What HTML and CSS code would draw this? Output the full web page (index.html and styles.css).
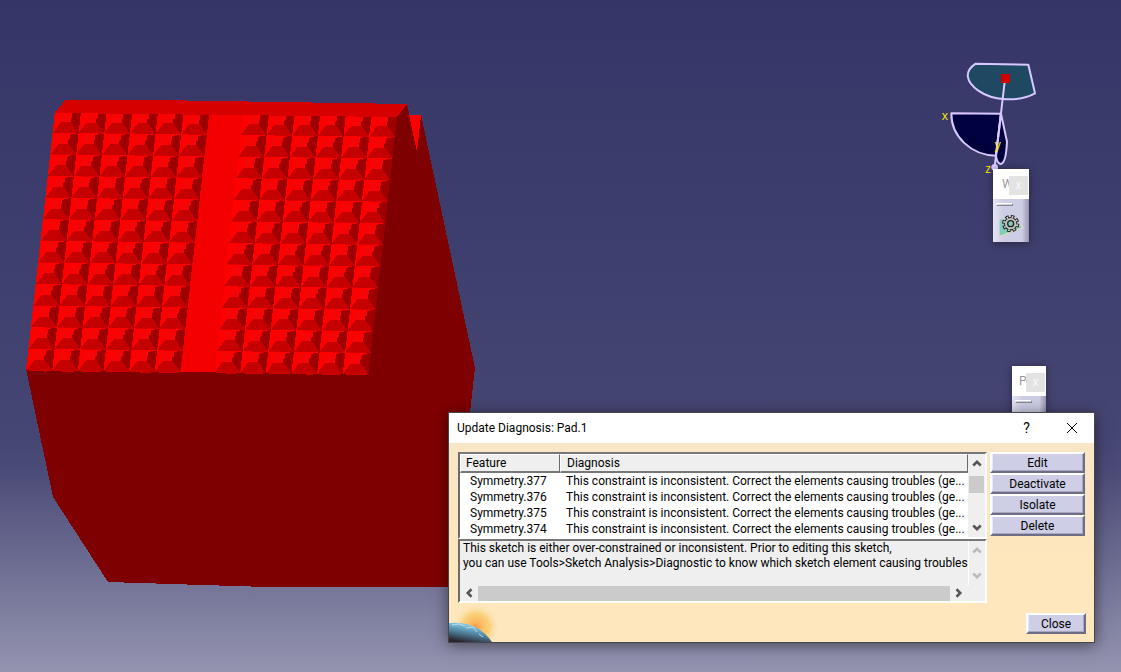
FILE: index.html
```html
<!DOCTYPE html>
<html lang="en">
<head>
    <meta charset="UTF-8">
    <meta name="viewport" content="width=device-width, initial-scale=1.0">
    <title>Update Diagnosis: Pad.1</title>
    <link rel="stylesheet" href="styles.css">
</head>
<body>
    <main class="viewport">
        <!-- 3D part -->
        <svg class="part" width="480" height="600" viewBox="0 0 480 600" shape-rendering="crispEdges">
            <defs>
                <g id="stud">
                    <path fill="#ff0000" d="M0 0L2.4-21.2L28-20.8L25.6.4z"/>
                    <path fill="#f50505" d="M8-19L19-19L18-10L7-10z"/>
                    <path fill="#9c0000" d="M28-21L22-20L19-19L19-15L17.500-14L17.500-10L25.600.4z"/>
                    <path fill="#c40000" d="M0 0L6-8L8-10.300L18-10.300L25.600.4z"/>
                    <path fill="#d40000" d="M0 0L25.600.4L20 1.500L5 1z"/>
                </g>
                <g id="row">
                    <use href="#stud"/>
                    <use href="#stud" x="25.65" y="0.3"/>
                    <use href="#stud" x="51.3" y="0.6"/>
                    <use href="#stud" x="76.95" y="0.9"/>
                    <use href="#stud" x="102.6" y="1.2"/>
                    <use href="#stud" x="128.25" y="1.5"/>
                    <use href="#stud" x="188" y="2.2"/>
                    <use href="#stud" x="213.65" y="2.5"/>
                    <use href="#stud" x="239.3" y="2.8"/>
                    <use href="#stud" x="264.95" y="3.1"/>
                    <use href="#stud" x="290.6" y="3.4"/>
                    <use href="#stud" x="316.25" y="3.7"/>
                </g>
            </defs>
            <path fill="#7f0000" d="M26 369L395 112L407 104L417 152L421 115L475 368L470 412V587H266L108 582L53 497z"/>
            <path fill="#fa0000" d="M409 115H421L417 152z"/>
            <path fill="#f40000" d="M55 111L397 116L368 374L26 370z"/>
            <use href="#row" x="53" y="132.5"/>
            <use href="#row" x="50.6" y="154.1"/>
            <use href="#row" x="48.2" y="175.7"/>
            <use href="#row" x="45.8" y="197.3"/>
            <use href="#row" x="43.4" y="218.9"/>
            <use href="#row" x="41" y="240.5"/>
            <use href="#row" x="38.6" y="262.1"/>
            <use href="#row" x="36.2" y="283.7"/>
            <use href="#row" x="33.8" y="305.3"/>
            <use href="#row" x="31.4" y="326.9"/>
            <use href="#row" x="29" y="348.5"/>
            <use href="#row" x="26.6" y="370.1"/>
            <path fill="#d60000" d="M65 100L154 100L407 104L397 117L55 113z"/>
        </svg>

        <!-- Compass -->
        <svg class="compass" width="120" height="125" viewBox="0 0 360 375">
            <g stroke="#d9c8ff" stroke-width="6" stroke-linejoin="round">
                <path fill="#1f4962" d="M137 41L295 44L315 130C270 155 190 155 145 122C108 96 101 65 137 41z"/>
                <path fill="#00003f" d="M64 190L213 191L198 317C125 316 63 260 64 190z"/>
                <path fill="#00003f" d="M213 191L231 275Q228 342 211 342Q200 338 198 317z"/>
                <path fill="none" d="M224 96L194 350"/>
            </g>
            <circle cx="194" cy="352" r="10" fill="#d9c8ff"/>
            <rect x="213" y="72" width="27" height="27" fill="#cf0000"/>
            <g class="compass-axis">
                <text x="35" y="211">x</text>
                <text x="194" y="297">y</text>
                <text x="166" y="369">z</text>
            </g>
        </svg>

        <section class="toolbar toolbar-w">
            <header class="toolbar-title">
                <span>W</span>
                <button class="toolbar-close" type="button">x</button>
            </header>
            <div class="toolbar-body">
                <div class="toolbar-grip"></div>
                <button class="toolbar-tool" type="button" aria-label="Part Design">
                    <svg width="26" height="26" viewBox="0 0 78 78">
                        <path fill="#83cdb8" d="M5 20L5 73L76 45z"/>
                        <path fill="none" stroke="#e6dfb3" stroke-width="3" d="M5 73L76 46L48 28"/>
                        <circle cx="38" cy="35" r="20" fill="#222" stroke="#222" stroke-width="12" stroke-dasharray="9.7 6"/>
                        <circle cx="38" cy="35" r="20" fill="none" stroke="#d5d5d0" stroke-width="6" stroke-dasharray="4.7 11" stroke-dashoffset="-2.5"/>
                        <circle cx="38" cy="35" r="17" fill="#c6c7c5"/>
                        <circle cx="38" cy="35" r="9" fill="#83cdb8" stroke="#222" stroke-width="4"/>
                    </svg>
                </button>
            </div>
        </section>

        <section class="toolbar toolbar-p">
            <header class="toolbar-title">
                <span>P</span>
                <button class="toolbar-close" type="button">x</button>
            </header>
            <div class="toolbar-body">
                <div class="toolbar-grip"></div>
            </div>
        </section>

        <!-- Diagnosis dialog -->
        <section class="dialog" role="dialog" aria-labelledby="dialogTitle">
            <header class="dialog-title">
                <h1 id="dialogTitle">Update Diagnosis: Pad.1</h1>
                <button class="title-button" type="button">?</button>
                <button class="title-button" type="button" aria-label="Close window">
                    <svg width="12" height="12" viewBox="0 0 12 12"><path d="M1 1L11 11M11 1L1 11"/></svg>
                </button>
            </header>
            <div class="dialog-body">
                <div class="dialog-main">
                    <div class="panels">
                        <div class="list">
                            <table>
                                <thead>
                                    <tr><th class="col-feature">Feature</th><th>Diagnosis</th></tr>
                                </thead>
                                <tbody>
                                    <tr><td>Symmetry.377</td><td>This constraint is inconsistent. Correct the elements causing troubles (ge...</td></tr>
                                    <tr><td>Symmetry.376</td><td>This constraint is inconsistent. Correct the elements causing troubles (ge...</td></tr>
                                    <tr><td>Symmetry.375</td><td>This constraint is inconsistent. Correct the elements causing troubles (ge...</td></tr>
                                    <tr><td>Symmetry.374</td><td>This constraint is inconsistent. Correct the elements causing troubles (ge...</td></tr>
                                </tbody>
                            </table>
                            <div class="scroll-y">
                                <svg class="arrow" viewBox="0 0 8 8"><path d="M1 6L4 3L7 6"/></svg>
                                <div class="thumb"></div>
                                <svg class="arrow" viewBox="0 0 8 8"><path d="M1 2L4 5L7 2"/></svg>
                            </div>
                        </div>
                        <div class="message">
                            <div class="message-top">
                                <textarea aria-label="Diagnosis message" wrap="off" readonly>This sketch is either over-constrained or inconsistent. Prior to editing this sketch,
you can use Tools&gt;Sketch Analysis&gt;Diagnostic to know which sketch element causing troubles</textarea>
                                <div class="scroll-y scroll-off">
                                    <svg class="arrow" viewBox="0 0 8 8"><path d="M1 6L4 3L7 6"/></svg>
                                    <svg class="arrow" viewBox="0 0 8 8"><path d="M1 2L4 5L7 2"/></svg>
                                </div>
                            </div>
                            <div class="scroll-x">
                                <svg class="arrow" viewBox="0 0 8 8"><path d="M6 1L3 4L6 7"/></svg>
                                <div class="thumb"></div>
                                <svg class="arrow" viewBox="0 0 8 8"><path d="M2 1L5 4L2 7"/></svg>
                            </div>
                        </div>
                    </div>
                    <div class="actions">
                        <button class="button" type="button">Edit</button>
                        <button class="button" type="button">Deactivate</button>
                        <button class="button" type="button">Isolate</button>
                        <button class="button" type="button">Delete</button>
                    </div>
                </div>
                <footer class="dialog-footer">
                    <svg class="planet" width="50" height="39" viewBox="0 0 50 39">
                        <defs>
                            <radialGradient id="sun">
                                <stop offset="0" stop-color="#ff9d45"/>
                                <stop offset="0.25" stop-color="#fdb960"/>
                                <stop offset="0.6" stop-color="#fad27c"/>
                                <stop offset="1" stop-color="#fde5bd" stop-opacity="0"/>
                            </radialGradient>
                            <linearGradient id="earth" x1="0.7" y1="0" x2="0.3" y2="1">
                                <stop offset="0" stop-color="#b5e1f0"/>
                                <stop offset="0.35" stop-color="#6aaccb"/>
                                <stop offset="0.65" stop-color="#476f88"/>
                                <stop offset="1" stop-color="#28232c"/>
                            </linearGradient>
                        </defs>
                        <circle cx="27" cy="24" r="23" fill="url(#sun)"/>
                        <path fill="url(#earth)" d="M0 20Q28 17 43 39H0z"/>
                        <path fill="none" stroke="#b9dde8" stroke-width="1" d="M3 22L10 21L16 23M17 25L24 24L28 29M30 31L34 34"/>
                    </svg>
                    <button class="button button-close" type="button">Close</button>
                </footer>
            </div>
        </section>
    </main>
</body>
</html>
```
FILE: styles.css
```css
* {
    box-sizing: border-box;
}

body {
    margin: 0;
    font-family: Roboto, "Open Sans", sans-serif;
    font-size: 12px;
    color: #000;
}

button, textarea {
    font: inherit;
    color: inherit;
}

.viewport {
    position: relative;
    min-height: 100vh;
    overflow: hidden;
    background: linear-gradient(#353567 0%, #464674 65%, #4b4b78 70%, #9494b0 100%);
}

.part {
    display: block;
}

.compass {
    position: absolute;
    top: 50px;
    right: 71px;
    overflow: visible;
}

.compass-axis {
    fill: #ffee00;
    font-family: "Open Sans", sans-serif;
    font-size: 36px;
}

/* Floating toolbars */
.toolbar {
    position: absolute;
    background: #fff;
    box-shadow: 0 1px 8px rgba(0, 0, 0, 0.4);
}

.toolbar-w {
    top: 169px;
    right: 92px;
    width: 36px;
}

.toolbar-p {
    top: 366px;
    right: 75px;
    width: 34px;
}

.toolbar-title {
    display: flex;
    align-items: center;
    justify-content: flex-end;
    height: 30px;
    padding-right: 1px;
    color: #999;
}

.toolbar-title span {
    width: 7px;
    overflow: hidden;
}

.toolbar-close {
    width: 19px;
    height: 19px;
    margin-top: 2px;
    padding: 0;
    border: none;
    background: #e3e3e3;
    color: #f8f8f8;
    line-height: 16px;
}

.toolbar-body {
    min-height: 43px;
    padding: 4px 3px;
    background: linear-gradient(90deg, #e4e4f2, #cdcde5 30%, #cdcde5 80%, #9696ad);
}

.toolbar-grip {
    width: 17px;
    height: 3px;
    border: 1px solid #fff;
    border-right-color: #888;
    border-bottom-color: #888;
}

.toolbar-tool {
    display: block;
    margin: 6px 0 0 2px;
    padding: 0;
    border: none;
    background: none;
}

.toolbar-tool svg {
    display: block;
}

/* Dialog */
.dialog {
    position: absolute;
    right: 26px;
    bottom: 29px;
    width: 647px;
    border: 1px solid #45454b;
    background: #fff;
    box-shadow: 0 2px 14px rgba(0, 0, 0, 0.5);
}

.dialog-title {
    display: flex;
    align-items: center;
    height: 30px;
    padding-left: 8px;
}

.dialog-title h1 {
    flex: 1;
    margin: 0;
    font-size: 12px;
    font-weight: normal;
}

.title-button {
    width: 45px;
    height: 30px;
    padding: 0;
    border: none;
    background: none;
    font-size: 14px;
}

.title-button svg {
    display: block;
    margin: 0 auto;
    stroke: #000;
}

.dialog-body {
    padding-top: 9px;
    background: linear-gradient(#f8e6c7, #fee6bd 60%);
}

.dialog-main {
    display: flex;
    gap: 3px;
    padding: 0 9px;
}

.panels {
    flex: 1;
    min-width: 0;
}

.list, .message {
    border: 2px solid #6b6b6b;
    border-top-color: #777;
    border-right-color: #fff;
    border-bottom-color: #fff;
    background: #efefef;
}

.list {
    display: flex;
    height: 87px;
}

.list table {
    flex: 1;
    width: 100%;
    min-width: 0;
    border-collapse: separate;
    border-spacing: 0;
    table-layout: fixed;
    background: #fff;
}

.list th {
    height: 19px;
    padding: 0 6px;
    border: 1px solid #fff;
    border-right-color: #696969;
    border-bottom: 2px solid #777;
    background: #efefef;
    font-weight: normal;
    line-height: 16px;
    text-align: left;
}

.list td {
    height: 16px;
    padding: 0 6px;
    line-height: 16px;
    white-space: nowrap;
}

.list td:first-child {
    padding-left: 10px;
}

.list .col-feature {
    width: 100px;
    padding-left: 5px;
}

.scroll-y {
    display: flex;
    flex: none;
    flex-direction: column;
    align-items: center;
    width: 17px;
    background: #efefef;
}

.scroll-y .thumb {
    width: 15px;
    height: 17px;
    margin: 4px 0 auto;
    background: #cbcbcb;
}

.arrow {
    flex: none;
    width: 10px;
    height: 10px;
    margin: 4px;
    fill: none;
    stroke: #555;
    stroke-width: 2px;
}

.message {
    height: 64px;
}

.message-top {
    display: flex;
    height: 44px;
}

.message textarea {
    flex: 1;
    min-width: 0;
    padding: 0 3px;
    border: none;
    background: none;
    line-height: 15px;
    overflow: hidden;
    resize: none;
    outline: none;
}

.scroll-off {
    justify-content: space-between;
    border-left: 1px solid #fff;
}

.scroll-off .arrow {
    stroke: #bbb;
}

.scroll-x {
    display: flex;
    align-items: center;
    height: 16px;
    padding-right: 17px;
}

.scroll-x .thumb {
    flex: 1;
    height: 15px;
    background: #cbcbcb;
}

.actions {
    width: 95px;
}

.button {
    display: block;
    width: 100%;
    height: 21px;
    padding: 0;
    border: 2px solid #fff;
    border-right-color: #6d6d88;
    border-bottom-color: #6d6d88;
    background: #cecee6;
    line-height: 16px;
    box-shadow: inset -1px -1px #a7a7bf, inset 1px 0 #e8e8f8;
}

.dialog-footer {
    display: flex;
    align-items: flex-end;
    justify-content: space-between;
    height: 39px;
    padding-right: 8px;
}

.button-close {
    width: 60px;
    margin-bottom: 8px;
}
```
